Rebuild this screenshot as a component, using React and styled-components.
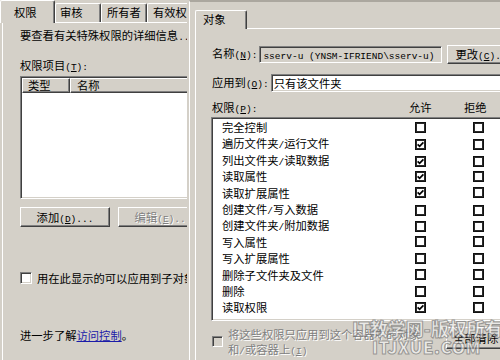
import React from "react";
import styled, { createGlobalStyle, css } from "styled-components";

const Global = createGlobalStyle`
  html, body { margin: 0; padding: 0; background: #d4d0c8; }
  body {
    font-family: "Noto Sans CJK SC", "Liberation Sans", sans-serif;
    font-size: 11.3px;
    color: #000;
  }
`;

const sunken = css`
  border: 1px solid;
  border-color: #808080 #fff #fff #808080;
  box-shadow: inset 1px 1px 0 #404040, inset -1px -1px 0 #d4d0c8;
`;
const raised = css`
  border: 1px solid;
  border-color: #fff #404040 #404040 #fff;
  box-shadow: inset -1px -1px 0 #808080, inset 1px 1px 0 #d4d0c8;
`;
const disabledText = css`
  color: #808080;
  text-shadow: 1px 1px 0 #fff;
`;

const Root = styled.div`
  position: relative;
  width: 500px;
  height: 360px;
  display: flex;
  overflow: hidden;
  background: #d4d0c8;
  line-height: 16px;
`;

const Lat = styled.span`
  font-family: "Liberation Mono", "DejaVu Sans Mono", monospace;
  font-size: 9.5px;
`;

const mix = (s) =>
  s.split(/([\x00-\x7F]+)/).map((p, i) =>
    /^[\x00-\x7F]+$/.test(p) ? <Lat key={i}>{p}</Lat> : p
  );

/* ---------- left dialog ---------- */
const LeftPane = styled.div`
  width: 187px;
  flex-shrink: 0;
  height: 360px;
  overflow: hidden;
  display: flex;
  flex-direction: column;
`;

const TabStrip = styled.div`
  display: flex;
  align-items: flex-end;
  height: ${(p) => p.$h}px;
  flex-shrink: 0;
`;

const Tab = styled.div`
  box-sizing: border-box;
  flex-shrink: 0;
  width: ${(p) => p.$w}px;
  height: ${(p) => p.$ht}px;
  margin-bottom: ${(p) => (p.$active ? -1 : 0)}px;
  padding-left: ${(p) => p.$pl}px;
  padding-top: ${(p) => p.$pt || 0}px;
  background: #d4d0c8;
  border-left: 1px solid #fff;
  border-top: 1px solid #fff;
  border-right: 1px solid #404040;
  box-shadow: inset -1px 0 0 #808080;
  border-radius: 2px 2px 0 0;
  position: relative;
  z-index: ${(p) => (p.$active ? 1 : 0)};
  white-space: nowrap;
`;

const LeftPage = styled.div`
  flex: 1;
  margin-left: 2px;
  border-top: 1px solid #fff;
  border-left: 1px solid #fff;
  padding: 4px 0 0 17px;
  display: flex;
  flex-direction: column;
  white-space: nowrap;
`;

const Line = styled.div`
  height: 16px;
  margin-top: ${(p) => p.$mt || 0}px;
  flex-shrink: 0;
`;

const ListBox = styled.div`
  ${sunken};
  box-sizing: border-box;
  margin-top: 3px;
  width: 200px;
  height: 123px;
  background: #fff;
  padding: 1px 0 0 1px;
  flex-shrink: 0;
`;

const HeadRow = styled.div`
  display: flex;
`;

const HeadCell = styled.div`
  ${raised};
  box-sizing: border-box;
  height: 15px;
  line-height: 13px;
  width: ${(p) => p.$w}px;
  padding-left: ${(p) => p.$pl}px;
  background: #d4d0c8;
`;

const BtnRow = styled.div`
  display: flex;
  gap: 8px;
  margin-top: 8px;
  flex-shrink: 0;
`;

const Btn = styled.div`
  ${raised};
  box-sizing: border-box;
  flex-shrink: 0;
  width: ${(p) => p.$w}px;
  height: ${(p) => p.$h || 20}px;
  line-height: ${(p) => (p.$h || 20) - 2}px;
  margin-left: ${(p) => p.$ml || 0}px;
  padding-left: ${(p) => p.$pl || 0}px;
  text-align: ${(p) => (p.$pl ? "left" : "center")};
  background: #d4d0c8;
  white-space: nowrap;
  ${(p) => p.$disabled && disabledText};
`;

const CheckRow = styled.div`
  display: flex;
  align-items: center;
  gap: 5px;
  height: 16px;
  margin-top: 43px;
  flex-shrink: 0;
`;

const WinCheck = styled.div`
  ${sunken};
  box-sizing: border-box;
  width: 12px;
  height: 12px;
  background: #fff;
  flex-shrink: 0;
`;

const Link = styled.span`
  color: #1b1ba8;
  text-decoration: underline;
`;

/* ---------- right dialog ---------- */
const RightWin = styled.div`
  width: 330px;
  flex-shrink: 0;
  padding-left: 2px;
  display: flex;
`;

const RightFrame = styled.div`
  flex: 1;
  border-left: 1px solid #fff;
  border-top: 2px solid #aba79f;
  padding: 8px 0 0 5px;
  display: flex;
  flex-direction: column;
`;

const RightPage = styled.div`
  flex: 1;
  border-top: 1px solid #fff;
  border-left: 1px solid #fff;
  padding-left: 15px;
  display: flex;
  flex-direction: column;
  white-space: nowrap;
`;

const FieldRow = styled.div`
  display: flex;
  align-items: center;
  height: ${(p) => p.$h}px;
  margin-top: ${(p) => p.$mt}px;
  flex-shrink: 0;
`;

const Label = styled.span`
  margin-right: 2px;
  padding-left: 1px;
`;

const NameField = styled.div`
  ${sunken};
  box-sizing: border-box;
  width: 183px;
  height: 17px;
  line-height: 15px;
  padding-left: 3px;
  background: #d4d0c8;
  flex-shrink: 0;
`;

const Combo = styled.div`
  ${sunken};
  box-sizing: border-box;
  width: 240px;
  height: 18px;
  line-height: 16px;
  padding-left: 2px;
  background: #fff;
  flex-shrink: 0;
`;

const ColHead = styled.div`
  display: grid;
  grid-template-columns: 197px 55px 60px;
  height: 16px;
  margin-top: 7px;
  padding-left: 1px;
  flex-shrink: 0;
`;

const PermList = styled.div`
  ${sunken};
  box-sizing: border-box;
  margin-top: 2px;
  width: 300px;
  height: 204px;
  background: #fff;
  padding: 1px 0 0 10px;
  flex-shrink: 0;
`;

const PermRow = styled.div`
  display: grid;
  grid-template-columns: 193px 11px 47px 11px;
  align-items: center;
  height: 16.4px;
`;

const Box = styled.div`
  box-sizing: border-box;
  width: 11px;
  height: 11px;
  border: 1px solid #111;
  box-shadow: inset 0 0 0 1px #2a2a2a;
  background: #fff;
  display: flex;
  align-items: center;
  justify-content: center;
`;

const BottomRow = styled.div`
  display: flex;
  align-items: flex-start;
  margin-top: 6px;
  flex-shrink: 0;
`;

const GrayBox = styled.div`
  ${sunken};
  box-sizing: border-box;
  width: 11px;
  height: 11px;
  margin: 9px 0 0 1px;
  background: #d4d0c8;
  flex-shrink: 0;
`;

const DisabledText = styled.div`
  ${disabledText};
  width: 214px;
  margin-left: 5px;
  line-height: 15px;
  flex-shrink: 0;
`;

const Watermark = styled.div`
  position: absolute;
  left: ${(p) => p.$x}px;
  top: ${(p) => p.$y}px;
  font-family: "Noto Sans CJK SC", "Liberation Sans", sans-serif;
  font-weight: 900;
  font-size: ${(p) => p.$fs}px;
  letter-spacing: ${(p) => p.$ls || 0}px;
  line-height: 1;
  color: rgba(248, 248, 248, 0.65);
  -webkit-text-stroke: 1px rgba(100, 100, 100, 0.6);
  white-space: nowrap;
  pointer-events: none;
`;

const Check = () => (
  <svg width="7" height="7" viewBox="0 0 7 7">
    <path d="M0.6 3.4 L2.6 5.4 L6.4 1.4" fill="none" stroke="#000" strokeWidth="1.7" />
  </svg>
);

const perms = [
  ["完全控制", false],
  ["遍历文件夹/运行文件", true],
  ["列出文件夹/读取数据", true],
  ["读取属性", true],
  ["读取扩展属性", true],
  ["创建文件/写入数据", false],
  ["创建文件夹/附加数据", false],
  ["写入属性", false],
  ["写入扩展属性", false],
  ["删除子文件夹及文件", false],
  ["删除", false],
  ["读取权限", true],
];

export default function App() {
  return (
    <>
      <Global />
      <Root>
        <LeftPane>
          <TabStrip $h={22}>
            <Tab $active $w={55} $ht={23} $pl={13} $pt={3}>权限</Tab>
            <Tab $w={46} $ht={19} $pl={4}>审核</Tab>
            <Tab $w={46} $ht={19} $pl={5}>所有者</Tab>
            <Tab $w={60} $ht={19} $pl={5}>有效权限</Tab>
          </TabStrip>
          <LeftPage>
            <Line>要查看有关特殊权限的详细信息<Lat>...</Lat></Line>
            <Line $mt={14}>
              权限项目<Lat>(<u>T</u>):</Lat>
            </Line>
            <ListBox>
              <HeadRow>
                <HeadCell $w={48} $pl={5}>类型</HeadCell>
                <HeadCell $w={140} $pl={6}>名称</HeadCell>
              </HeadRow>
            </ListBox>
            <BtnRow>
              <Btn $w={90}>添加<Lat>(<u>D</u>)...</Lat></Btn>
              <Btn $w={90} $disabled>编辑<Lat>(<u>E</u>)...</Lat></Btn>
            </BtnRow>
            <CheckRow>
              <WinCheck />
              <span>用在此显示的可以应用到子对象</span>
            </CheckRow>
            <Line $mt={41}>
              进一步了解<Link>访问控制</Link>。
            </Line>
          </LeftPage>
        </LeftPane>

        <RightWin>
          <RightFrame>
            <TabStrip $h={18}>
              <Tab $active $w={52} $ht={19} $pl={7}>对象</Tab>
            </TabStrip>
            <RightPage>
              <FieldRow $h={17} $mt={17}>
                <Label>名称<Lat>(<u>N</u>):</Lat></Label>
                <NameField>
                  <Lat>sserv-u (YNSM-IFRIEND\sserv-u)</Lat>
                </NameField>
                <Btn $w={80} $h={19} $pl={7} $ml={5}>
                  更改<Lat>(<u>C</u>)...</Lat>
                </Btn>
              </FieldRow>
              <FieldRow $h={18} $mt={11}>
                <Label>应用到<Lat>(<u>O</u>):</Lat></Label>
                <Combo>只有该文件夹</Combo>
              </FieldRow>
              <ColHead>
                <span>权限<Lat>(<u>P</u>):</Lat></span>
                <span>允许</span>
                <span>拒绝</span>
              </ColHead>
              <PermList>
                {perms.map(([name, allow]) => (
                  <PermRow key={name}>
                    <span>{mix(name)}</span>
                    <Box>{allow && <Check />}</Box>
                    <span />
                    <Box />
                  </PermRow>
                ))}
              </PermList>
              <BottomRow>
                <GrayBox />
                <DisabledText>
                  将这些权限只应用到这个容器中的对象
                  <br />
                  和<Lat>/</Lat>或容器上<Lat>(<u>I</u>)</Lat>
                </DisabledText>
                <Btn $w={80} $h={22} $pl={6} $ml={4}>全部清除</Btn>
              </BottomRow>
            </RightPage>
          </RightFrame>
        </RightWin>

        <Watermark $x={352} $y={319} $fs={18}>IT教学网-版权所有</Watermark>
        <Watermark $x={372} $y={338} $fs={17} $ls={0.5}>ITJXUE.COM</Watermark>
      </Root>
    </>
  );
}
